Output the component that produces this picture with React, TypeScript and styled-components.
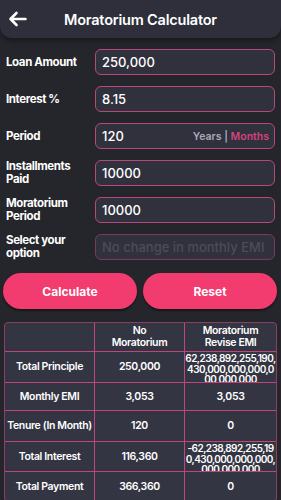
import React from "react";
import styled, { createGlobalStyle } from "styled-components";

const Global = createGlobalStyle`
  html, body { margin: 0; padding: 0; background: #25262b; }
  body { font-family: "Inter", "Lato", sans-serif; color: #fff; }
  * { box-sizing: border-box; }
`;

const Page = styled.div`
  width: 281px;
  height: 500px;
  overflow: hidden;
  background: #25262b;
`;

const Header = styled.header`
  height: 38px;
  background: #2e2f3b;
  border-radius: 0 0 12px 12px;
  box-shadow: 0 3px 5px rgba(0, 0, 0, 0.35);
  display: flex;
  align-items: center;
  padding-left: 8px;
`;

const Back = styled.div`
  width: 20px;
  height: 20px;
  display: flex;
  align-items: center;
`;

const Title = styled.h1`
  margin: 0 0 0 36px;
  font-size: 14.5px;
  font-weight: 600;
  letter-spacing: -0.2px;
`;

const Form = styled.div`
  display: flex;
  flex-direction: column;
  gap: 11px;
  padding: 11px 6px 0 6px;
`;

const Row = styled.div`
  display: grid;
  grid-template-columns: 89px 1fr;
  align-items: center;
`;

const Label = styled.label`
  font-size: 11.5px;
  font-weight: 700;
  line-height: 13px;
  letter-spacing: -0.4px;
`;

const Field = styled.div<{ $dim?: boolean }>`
  height: 26px;
  border: 1.5px solid ${(p) => (p.$dim ? "#7a3a5a" : "#b9487a")};
  border-radius: 6px;
  background: #30313d;
  display: flex;
  align-items: center;
  justify-content: space-between;
  padding: 0 5px 0 6px;
  font-size: 13px;
  font-weight: 500;
  color: ${(p) => (p.$dim ? "#4b4c5a" : "#fff")};
`;

const Unit = styled.span`
  font-size: 10.5px;
  font-weight: 600;
  color: #a9aab6;
`;

const UnitActive = styled.span`
  color: #d2447c;
`;

const Buttons = styled.div`
  display: grid;
  grid-template-columns: 1fr 1fr;
  gap: 6px;
  padding: 13px 4px 0 3px;
`;

const Button = styled.button`
  height: 36px;
  border: none;
  border-radius: 18px;
  background: #f23b6f;
  color: #fff;
  font-family: "Inter", sans-serif;
  font-size: 12px;
  font-weight: 700;
  box-shadow: 0 2px 2px rgba(0, 0, 0, 0.4);
`;

const Table = styled.div`
  margin: 13px 4px 0 4px;
  border: 1px solid #8a4064;
  border-radius: 4px;
  background: #343542;
  display: grid;
  grid-template-columns: 90px 90px 1fr;
  grid-template-rows: 29px 31px 28px 31px 30px 29px;
  overflow: hidden;
`;

const Cell = styled.div<{ $right?: boolean; $bottom?: boolean; $top?: boolean }>`
  border-right: ${(p) => (p.$right ? "1px solid #c0457a" : "none")};
  border-bottom: ${(p) => (p.$bottom ? "1px solid #c0457a" : "none")};
  display: flex;
  flex-direction: column;
  align-items: center;
  justify-content: ${(p) => (p.$top ? "flex-start" : "center")};
  text-align: center;
  font-size: 10.5px;
  font-weight: 600;
  line-height: 12px;
  letter-spacing: -0.35px;
  white-space: nowrap;
  overflow: hidden;
  padding: ${(p) => (p.$top ? "1px 0 0" : "0")};
`;

const Wrap = styled.div`
  white-space: normal;
  word-break: break-all;
  line-height: 10.5px;
  font-size: 10px;
  letter-spacing: -0.55px;
  width: 100%;
`;

const rows: [string, string, string][] = [
  ["Total Principle", "250,000", "62,238,892,255,190,430,000,000,000,000,000,000"],
  ["Monthly EMI", "3,053", "3,053"],
  ["Tenure (In Month)", "120", "0"],
  ["Total Interest", "116,360", "-62,238,892,255,190,430,000,000,000,000,000,000"],
  ["Total Payment", "366,360", "0"],
];

export default function App() {
  return (
    <Page>
      <Global />
      <Header>
        <Back>
          <svg width="19" height="16" viewBox="0 0 19 16" fill="none">
            <path d="M17.5 8H2.5M8.5 2L2.5 8L8.5 14" stroke="#fff" strokeWidth="2.6" strokeLinecap="round" strokeLinejoin="round" />
          </svg>
        </Back>
        <Title>Moratorium Calculator</Title>
      </Header>
      <Form>
        <Row>
          <Label>Loan Amount</Label>
          <Field>250,000</Field>
        </Row>
        <Row>
          <Label>Interest %</Label>
          <Field>8.15</Field>
        </Row>
        <Row>
          <Label>Period</Label>
          <Field>
            120
            <Unit>
              Years | <UnitActive>Months</UnitActive>
            </Unit>
          </Field>
        </Row>
        <Row>
          <Label>
            Installments
            <br />
            Paid
          </Label>
          <Field>10000</Field>
        </Row>
        <Row>
          <Label>
            Moratorium
            <br />
            Period
          </Label>
          <Field>10000</Field>
        </Row>
        <Row>
          <Label>
            Select your
            <br />
            option
          </Label>
          <Field $dim>No change in monthly EMI</Field>
        </Row>
      </Form>
      <Buttons>
        <Button>Calculate</Button>
        <Button>Reset</Button>
      </Buttons>
      <Table>
        <Cell $right $bottom />
        <Cell $right $bottom>
          <span>No</span>
          <span>Moratorium</span>
        </Cell>
        <Cell $bottom>
          <span>Moratorium</span>
          <span>Revise EMI</span>
        </Cell>
        {rows.map((r, i) => {
          const last = i === rows.length - 1;
          const long = r[2].length > 12;
          return (
            <React.Fragment key={r[0]}>
              <Cell $right $bottom={!last}>{r[0]}</Cell>
              <Cell $right $bottom={!last}>{r[1]}</Cell>
              <Cell $bottom={!last} $top={long}>
                {long ? <Wrap>{r[2]}</Wrap> : r[2]}
              </Cell>
            </React.Fragment>
          );
        })}
      </Table>
    </Page>
  );
}
